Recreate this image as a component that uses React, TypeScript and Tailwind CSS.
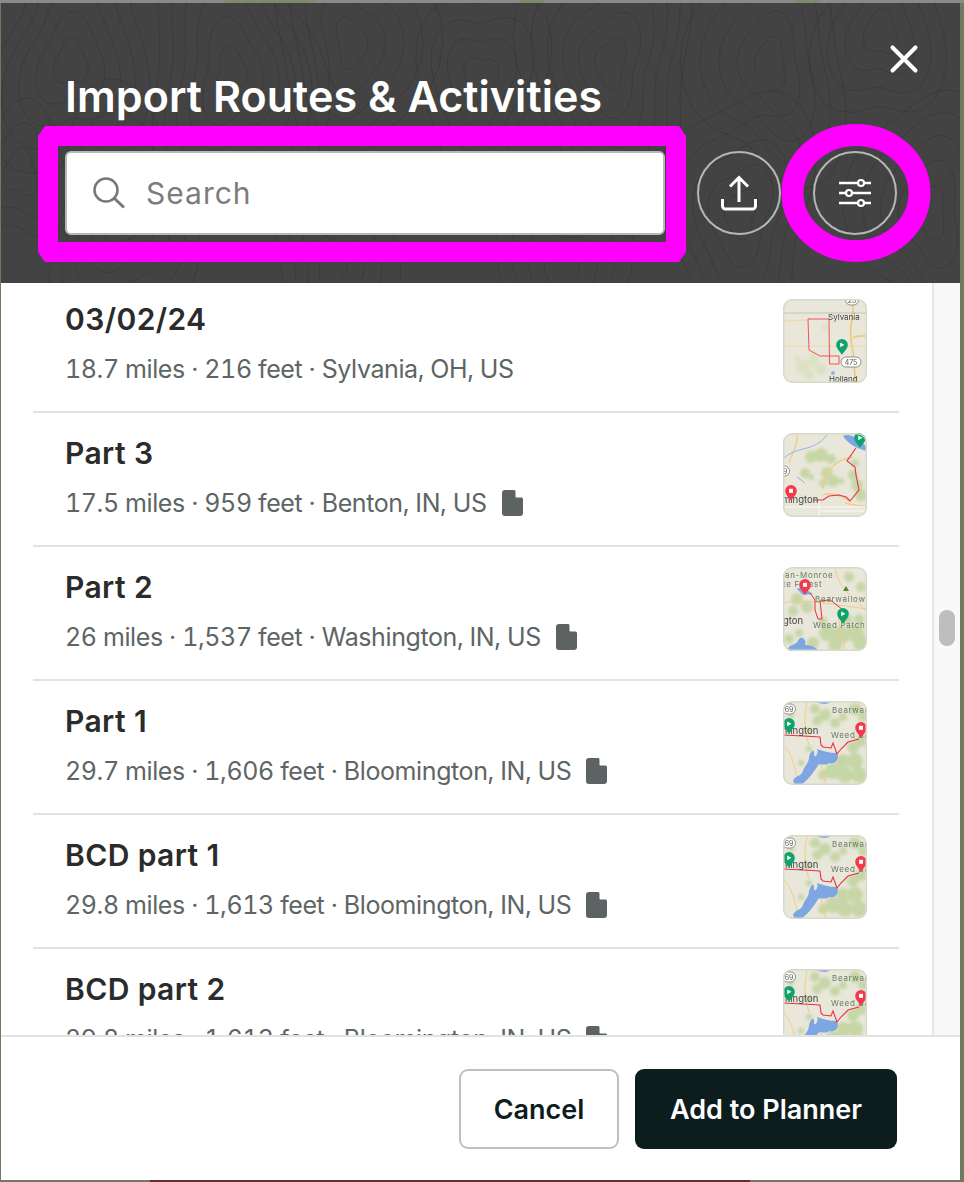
import type { ReactNode } from 'react';
import { X } from 'lucide-react';

interface RouteRow {
  title: string;
  meta: string;
  hasFile: boolean;
  map: ReactNode;
}

const Pin = ({ x, y, color, kind }: { x: number; y: number; color: string; kind: 'play' | 'stop' }) => (
  <g transform={`translate(${x} ${y})`}>
    <path d="M0 0C-1.5-3-5.8-6-5.8-10.2A5.8 5.8 0 0 1 5.8-10.2C5.8-6 1.5-3 0 0Z" fill={color} />
    {kind === 'play' ? (
      <path d="M-1.8-12.5L2.4-10.2L-1.8-7.8Z" fill="#fff" />
    ) : (
      <rect x={-2} y={-12.2} width={4} height={4} fill="#fff" />
    )}
  </g>
);

const Shield = ({ x, y, label, w = 13 }: { x: number; y: number; label: string; w?: number }) => (
  <g>
    <rect x={x - w / 2} y={y - 5} width={w} height={10} rx={5} fill="#fff" stroke="#666" strokeWidth={0.7} />
    <text x={x} y={y + 2.6} fontSize={7} textAnchor="middle" fill="#555" fontFamily="Inter, sans-serif">
      {label}
    </text>
  </g>
);

const MapLabel = ({ x, y, children, color = '#444', size = 8, spaced = false }: { x: number; y: number; children: string; color?: string; size?: number; spaced?: boolean }) => (
  <text x={x} y={y} fontSize={size} fill={color} letterSpacing={spaced ? 0.7 : 0} fontFamily="Inter, sans-serif">
    {children}
  </text>
);

// forest patches on the little maps
const Blotches = ({ spots, fill = '#c6d6a6' }: { spots: number[][]; fill?: string }) => (
  <g fill={fill} className="blur-[1.5px]">
    {spots.map(([cx, cy, r], i) => (
      <circle key={i} cx={cx} cy={cy} r={r} />
    ))}
  </g>
);

const Thumb = ({ children }: { children: ReactNode }) => (
  <svg viewBox="0 0 84 84" className="w-[84px] h-[84px] shrink-0 rounded-[9px] bg-[#e9e7da] blur-[0.35px]">
    {children}
    <rect x={0.75} y={0.75} width={82.5} height={82.5} rx={8.5} fill="none" stroke="#d8d8cb" strokeWidth={1.5} />
  </svg>
);

const sylvaniaMap = (
  <Thumb>
    <Blotches spots={[[20, 68, 7], [30, 62, 6], [38, 70, 6], [26, 76, 5], [14, 60, 3], [42, 28, 3], [30, 56, 3]]} fill="#dbe2c4" />
    <path d="M0 47H84M0 22L26 21" stroke="#efd9a0" strokeWidth={1.2} fill="none" />
    <path d="M70 0C72 14 66 24 68 40C70 52 72 70 72 84M70 39C74 36 80 37 84 37" stroke="#efc97a" strokeWidth={1.6} fill="none" />
    <path d="M0 14H84" stroke="#b5b5aa" strokeWidth={0.7} />
    <path d="M25 20H46L46.5 65H56V57H37L26 51Z" fill="none" stroke="#f2525c" strokeWidth={1} />
    <circle cx={50} cy={74} r={2} fill="#8fb4e8" />
    <MapLabel x={45} y={21}>Sylvania</MapLabel>
    <MapLabel x={46} y={83}>Holland</MapLabel>
    <Shield x={69} y={1} label="23" />
    <Shield x={68} y={63} label="475" w={20} />
    <Pin x={59} y={56} color="#0ea36a" kind="play" />
  </Thumb>
);

const partThreeMap = (
  <Thumb>
    <Blotches
      spots={[[28, 24, 6], [38, 22, 7], [48, 26, 5], [22, 40, 5], [44, 40, 6], [50, 48, 6], [40, 50, 4], [70, 42, 5], [74, 52, 6], [78, 62, 6], [58, 48, 3], [28, 44, 3], [72, 30, 4]]}
    />
    <path d="M14 0C16 12 8 22 6 30M70 24C54 26 40 38 40 56M40 62C50 58 60 64 66 68M62 70C70 72 78 74 84 72" stroke="#efcd83" strokeWidth={1.3} fill="none" />
    <path d="M0 26C14 12 30 20 44 2M14 44L22 50" stroke="#8fb4e8" strokeWidth={1} fill="none" />
    <path d="M60 3C66 0 74 4 84 14L84 18C74 16 64 10 60 3Z" fill="#7ea6e3" />
    <path d="M0 74H84M38 78H84M36 68V84" stroke="#fff" strokeWidth={0.8} />
    <path d="M73 15L64 28L72 34L73 42L76 57L67 68L63 64L56 62L46 63L40 67H30" fill="none" stroke="#ea2f45" strokeWidth={1.1} />
    <MapLabel x={-1} y={70} size={9.5}>mington</MapLabel>
    <Shield x={0} y={38} label="69" />
    <Pin x={77} y={15} color="#0ea36a" kind="play" />
    <Pin x={8} y={68} color="#f33a4c" kind="stop" />
  </Thumb>
);

const partTwoMap = (
  <Thumb>
    <Blotches
      spots={[[14, 32, 6], [24, 40, 6], [10, 44, 5], [44, 66, 8], [58, 68, 9], [72, 66, 9], [78, 76, 8], [30, 76, 6], [52, 78, 7], [64, 52, 5], [76, 52, 5], [40, 54, 4], [6, 72, 5], [16, 66, 4], [66, 10, 5], [78, 20, 5]]}
    />
    <path d="M52 0C54 14 60 24 84 44M0 36C20 32 40 36 84 42M56 44C54 56 60 70 62 84" stroke="#efcd83" strokeWidth={1} fill="none" />
    <path d="M14 22C18 18 26 24 30 27L20 28Z" fill="#7ea6e3" />
    <path d="M4 84C6 76 12 80 16 72C20 68 24 74 22 78C28 78 32 80 36 84Z" fill="#7ea6e3" />
    <path d="M60 24L66 24L63 19Z" fill="#4d8a2f" />
    <path d="M27 26L32 33L32 43L35 52L39 52L37 34L47 33L50 35L55 39L60 43" fill="none" stroke="#ea2f45" strokeWidth={1} />
    <MapLabel x={2} y={11} color="#687a68" spaced>an-Monroe</MapLabel>
    <MapLabel x={0} y={20} color="#687a68" spaced>te Forest</MapLabel>
    <MapLabel x={32} y={35} color="#687a68" spaced>Bearwallow</MapLabel>
    <MapLabel x={0} y={57} size={9.5}>gton</MapLabel>
    <MapLabel x={30} y={61} color="#687a68" spaced>Weed Patch</MapLabel>
    <Pin x={22} y={28} color="#f33a4c" kind="stop" />
    <Pin x={60} y={57} color="#0ea36a" kind="play" />
  </Thumb>
);

const lakeMap = (
  <Thumb>
    <Blotches
      spots={[[32, 8, 5], [42, 14, 6], [34, 20, 5], [52, 22, 5], [60, 16, 4], [72, 8, 6], [80, 16, 5], [70, 46, 6], [78, 40, 6], [60, 60, 7], [72, 60, 8], [50, 70, 8], [62, 74, 8], [76, 74, 8], [40, 74, 5], [26, 48, 3], [18, 62, 3], [8, 14, 3], [26, 30, 3]]}
    />
    <path d="M0 44C8 50 12 66 16 84M24 0C22 14 20 24 26 44M34 52C40 62 38 74 44 84" stroke="#efcd83" strokeWidth={1} fill="none" />
    <path d="M32 0H48C46 4 38 4 32 0Z" fill="#7ea6e3" />
    <path d="M10 80C12 74 18 76 20 70C22 64 26 62 26 56C28 48 32 48 31 54C32 58 36 52 34 48C40 50 46 52 54 52C57 58 52 64 46 62C42 66 36 60 34 66C30 72 26 78 18 84H12Z" fill="#7ea6e3" />
    <path d="M0 34L20 35L37 36L38 44L40 46L48 47L50 42L54 53L58 48L65 41L76 38" fill="none" stroke="#ea2f45" strokeWidth={1.1} />
    <MapLabel x={49} y={12} color="#687a68" spaced>Bearwall</MapLabel>
    <MapLabel x={-1} y={33} size={9.5}>mington</MapLabel>
    <MapLabel x={48} y={37} color="#687a68" spaced>Weed Ba</MapLabel>
    <Shield x={6} y={8} label="69" />
    <Pin x={6} y={33} color="#0ea36a" kind="play" />
    <Pin x={78} y={37} color="#f33a4c" kind="stop" />
  </Thumb>
);

const rows: RouteRow[] = [
  { title: '03/02/24', meta: '18.7 miles · 216 feet · Sylvania, OH, US', hasFile: false, map: sylvaniaMap },
  { title: 'Part 3', meta: '17.5 miles · 959 feet · Benton, IN, US', hasFile: true, map: partThreeMap },
  { title: 'Part 2', meta: '26 miles · 1,537 feet · Washington, IN, US', hasFile: true, map: partTwoMap },
  { title: 'Part 1', meta: '29.7 miles · 1,606 feet · Bloomington, IN, US', hasFile: true, map: lakeMap },
  { title: 'BCD part 1', meta: '29.8 miles · 1,613 feet · Bloomington, IN, US', hasFile: true, map: lakeMap },
  { title: 'BCD part 2', meta: '29.8 miles · 1,613 feet · Bloomington, IN, US', hasFile: true, map: lakeMap },
];

const FileIcon = () => (
  <svg viewBox="0 0 21 26" className="w-[21px] h-[26px] ml-[15px] shrink-0">
    <path d="M3 0H12.5L21 8.5V23A3 3 0 0 1 18 26H3A3 3 0 0 1 0 23V3A3 3 0 0 1 3 0Z" fill="#5c6362" />
    <path d="M13.5 0.5L20.5 7.5H14.5A1 1 0 0 1 13.5 6.5Z" fill="#fff" />
  </svg>
);

// concentric wobbly rings, just to read as a topo texture behind the header
const contourRings = () => {
  const centers = [
    [70, 60, 5], [230, 70, 6], [350, 40, 5], [480, 75, 4], [610, 60, 6], [770, 60, 5], [880, 30, 4],
    [120, 220, 5], [330, 260, 4], [560, 270, 4], [740, 210, 5], [930, 210, 5], [20, 170, 3],
  ];
  const paths: string[] = [];
  centers.forEach(([cx, cy, n], c) => {
    for (let r = 1; r <= n; r++) {
      const pts: string[] = [];
      for (let i = 0; i < 36; i++) {
        const a = (i / 36) * Math.PI * 2;
        const wob = 1 + 0.16 * Math.sin(a * 3 + c) + 0.09 * Math.cos(a * 2 + c * 2 + r * 0.3);
        const rad = r * 19 * wob;
        pts.push(`${(cx + Math.cos(a) * rad * 0.8).toFixed(1)} ${(cy + Math.sin(a) * rad * 1.25).toFixed(1)}`);
      }
      paths.push(`M${pts.join('L')}Z`);
    }
  });
  return paths.join('');
};

const IconCircle = ({ children }: { children: ReactNode }) => (
  <button className="w-[84px] h-[84px] rounded-full border-2 border-[#b4b8b6] flex items-center justify-center shrink-0">
    {children}
  </button>
);

export default function App() {
  return (
    <div className="relative w-[964px] h-[1182px] overflow-hidden bg-[#6f7a60] font-[Inter,sans-serif]">
      {/* map peeking out around the dialog */}
      <svg className="absolute inset-0 w-[964px] h-[1182px]" viewBox="0 0 964 1182">
        <rect x={0} y={0} width={964} height={3} fill="#8a8a8a" />
        <rect x={225} y={0} width={90} height={3} fill="#7d8a6c" />
        <rect x={520} y={0} width={25} height={3} fill="#7d8a6c" />
        <rect x={795} y={0} width={25} height={3} fill="#7d8a6c" />
        <rect x={0} y={1180} width={964} height={2} fill="#77736a" />
        <rect x={150} y={1180} width={600} height={2} fill="#6b2c2c" />
      </svg>

      <div className="relative pt-[3px] pl-[1px] w-[960px]">
        <div className="w-[959px] h-[1177px] flex flex-col bg-white">
          {/* header */}
          <div className="relative h-[280px] shrink-0 bg-[#434343] overflow-hidden">
            <svg className="absolute inset-0 w-full h-full" viewBox="0 0 959 280">
              <path d={contourRings()} fill="none" stroke="#393939" strokeWidth={0.8} />
            </svg>
            <div className="relative pl-[64px] pr-[62px]">
              <div className="h-[148px] flex items-start justify-between">
                <h1 className="mt-[65px] text-[43px] leading-[56px] font-semibold text-white whitespace-nowrap tracking-[0.06px]">
                  Import Routes &amp; Activities
                </h1>
                <button className="mt-[33px] -mr-[29px] text-white">
                  <X size={46} strokeWidth={2.1} />
                </button>
              </div>
              <div className="flex items-center gap-[32px]">
                <div className="flex items-center w-[600px] h-[84px] bg-white border-2 border-[#b5bab8] rounded-[6px] pl-[26px] shrink-0">
                  <svg viewBox="0 0 32 32" className="w-[32px] h-[32px] shrink-0">
                    <circle cx={13} cy={13} r={11.5} fill="none" stroke="#777" strokeWidth={2.5} />
                    <path d="M21.5 21.5L31 30.5" stroke="#777" strokeWidth={3} />
                  </svg>
                  <span className="ml-[21px] text-[30px] tracking-[1px] text-[#7c7c7c]">Search</span>
                </div>
                <div className="flex gap-[32px]">
                  <IconCircle>
                    <svg viewBox="0 0 36 36" className="w-[36px] h-[36px]">
                      <path d="M18 2V27M9 11.5L18 2.5L27 11.5" fill="none" stroke="#fff" strokeWidth={3} />
                      <path d="M1.5 24V31A3 3 0 0 0 4.5 34H31.5A3 3 0 0 0 34.5 31V24" fill="none" stroke="#fff" strokeWidth={3} />
                    </svg>
                  </IconCircle>
                  <IconCircle>
                    <svg viewBox="0 0 34 30" className="w-[34px] h-[30px]">
                      <path d="M1 5H33M1 15H33M1 25H33" stroke="#fff" strokeWidth={2.4} />
                      <circle cx={23} cy={5} r={3} fill="#434343" stroke="#fff" strokeWidth={2.2} />
                      <circle cx={11} cy={15} r={3} fill="#434343" stroke="#fff" strokeWidth={2.2} />
                      <circle cx={23} cy={25} r={3} fill="#434343" stroke="#fff" strokeWidth={2.2} />
                    </svg>
                  </IconCircle>
                </div>
              </div>
            </div>
          </div>

          {/* list */}
          <div className="flex-1 min-h-0 flex">
            <div className="flex-1 min-w-0 overflow-hidden">
              <div className="-mt-[4px] pl-[32px] pr-[33px]">
                {rows.map((row) => (
                  <div key={row.title} className="h-[134px] shrink-0 border-b-2 border-[#dfe3e2] flex items-start justify-between pl-[32px] pr-[32px] pt-[20px]">
                    <div className="min-w-0">
                      <div className="text-[30px] leading-[40px] font-semibold tracking-[0.4px] text-[#2b2b2b]">{row.title}</div>
                      <div className="mt-[10px] flex items-center text-[25px] leading-[40px] tracking-[-0.4px] tabular-nums text-[#5e6565] whitespace-nowrap">
                        <span>{row.meta}</span>
                        {row.hasFile && <FileIcon />}
                      </div>
                    </div>
                    {row.map}
                  </div>
                ))}
              </div>
            </div>
            {/* scrollbar */}
            <div className="w-[28px] shrink-0 bg-[#f9f9f9] border-l-2 border-[#e6e6e6] pl-[5px] pt-[327px]">
              <div className="w-[16px] h-[36px] rounded-full bg-[#bdbdbd]" />
            </div>
          </div>

          {/* footer */}
          <div className="h-[145px] shrink-0 border-t-2 border-[#dfe3e2] bg-white flex items-start justify-end gap-[16px] pt-[32px] pr-[63px]">
            <button className="w-[160px] h-[80px] pt-[2px] rounded-[9px] border-2 border-[#bcc2c0] bg-white text-[27px] font-semibold text-[#0d1d1e]">
              Cancel
            </button>
            <button className="w-[262px] h-[80px] pt-[2px] rounded-[9px] bg-[#0d1d1e] text-[27px] font-semibold text-white">
              Add to Planner
            </button>
          </div>
        </div>
      </div>

      {/* pink review annotations drawn over the screenshot */}
      <svg className="absolute inset-0 w-[964px] h-[1182px] pointer-events-none" viewBox="0 0 964 1182">
        <path
          fillRule="evenodd"
          d="M45 126H679L686 136V252L679 262H45L38 252V136ZM58 146V242H666V146Z"
          fill="#ff00ff"
        />
        <ellipse cx={856} cy={193} rx={63.5} ry={58} fill="none" stroke="#ff00ff" strokeWidth={22} />
      </svg>
    </div>
  );
}
